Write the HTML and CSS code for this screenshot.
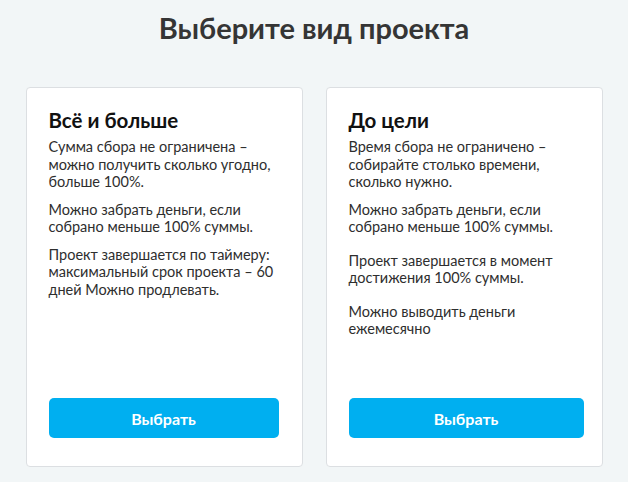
FILE: index.html
```html
<!DOCTYPE html>
<html lang="ru">
<head>
    <meta charset="UTF-8">
    <meta name="viewport" content="width=device-width, initial-scale=1.0">
    <title>Выберите вид проекта</title>
    <link rel="stylesheet" href="styles.css">
</head>
<body>
    <h1 class="page-title">Выберите вид проекта</h1>

    <div class="types">
        <div class="card">
            <h2>Всё и больше</h2>
            <p>Сумма сбора не ограничена – можно получить сколько угодно, больше 100%.</p>
            <p>Можно забрать деньги, если собрано меньше 100% суммы.</p>
            <p>Проект завершается по таймеру: максимальный срок проекта – 60 дней Можно продлевать.</p>
            <button class="choose">Выбрать</button>
        </div>

        <div class="card card-goal">
            <h2>До цели</h2>
            <p>Время сбора не ограничено – собирайте столько времени, сколько нужно.</p>
            <p>Можно забрать деньги, если собрано меньше 100% суммы.</p>
            <p class="spaced">Проект завершается в момент достижения 100% суммы.</p>
            <p class="spaced">Можно выводить деньги ежемесячно</p>
            <button class="choose">Выбрать</button>
        </div>
    </div>
</body>
</html>
```

FILE: styles.css
```css
body {
    margin: 0;
    font-family: Lato, "Open Sans", sans-serif;
    background-color: #f2f6f7;
    color: #333;
}
.page-title {
    margin: 0;
    padding-top: 10px;
    text-align: center;
    font-size: 29px;
    font-weight: bold;
    color: #353535;
    line-height: 36px;
}
.types {
    display: grid;
    grid-template-columns: 277px 277px;
    gap: 23px;
    justify-content: center;
    margin-top: 41px;
}
.card {
    display: flex;
    flex-direction: column;
    height: 380px;
    box-sizing: border-box;
    padding: 20px 23px 28px 22px;
    background-color: #fff;
    border: 1px solid #dcdfe2;
    border-radius: 4px;
}
.card h2 {
    margin: 0 0 6px;
    font-size: 20.5px;
    line-height: 24px;
    color: #111;
}
.card p {
    margin: 0 0 10px;
    font-size: 14.5px;
    line-height: 17.5px;
    color: #2e2e2e;
}
.card p.spaced {
    margin-top: 6px;
}
.choose {
    margin-top: auto;
    height: 40px;
    border: none;
    border-radius: 5px;
    background-color: #00aff0;
    color: #fff;
    font-family: Lato, "Open Sans", sans-serif;
    font-size: 16px;
    font-weight: bold;
    cursor: pointer;
}
.card-goal .choose {
    margin-right: -5px;
}
```
